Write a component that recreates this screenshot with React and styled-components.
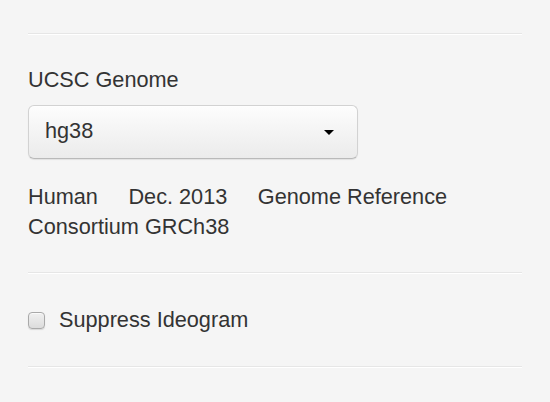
import React from 'react';
import styled, { createGlobalStyle } from 'styled-components';

const GlobalStyle = createGlobalStyle`
html, body {
    margin: 0;
    padding: 0;
    background: #f5f5f5;
}
body {
    font-family: "Liberation Sans", Arial, Helvetica, sans-serif;
    color: #333;
}
`

const Panel = styled.div`
width: 550px;
height: 402px;
box-sizing: border-box;
padding: 33px 28px 0 28px;
background: #f5f5f5;
overflow: hidden;
`

const Rule = styled.hr`
margin: 0;
height: 0;
border: 0;
border-top: 1px solid #e6e6e6;
border-bottom: 1px solid #fff;
`

const Group = styled.div`
padding: ${p => p.$top || 30}px 0 ${p => p.$bottom || 31}px 0;
`

const Label = styled.label`
display: block;
font-size: 21.7px;
line-height: 30px;
margin-bottom: 10px;
`

const SelectButton = styled.button`
display: flex;
align-items: center;
justify-content: space-between;
width: 330px;
height: 54px;
box-sizing: border-box;
padding: 0 23px 2px 16px;
font-family: inherit;
font-size: 21.7px;
line-height: 30px;
color: #333;
text-align: left;
background: linear-gradient(to bottom, #fdfdfd 0%, #ebebeb 100%);
border: 1px solid #d2d2d2;
border-bottom-color: #b9b9b9;
border-radius: 6px;
box-shadow: inset 0 1px 0 rgba(255, 255, 255, 0.6), 0 1px 1px rgba(0, 0, 0, 0.08);
cursor: pointer;
`

const Caret = styled.span`
display: inline-block;
width: 0;
height: 0;
margin-top: 2px;
border-top: 5px solid #000;
border-left: 5px solid transparent;
border-right: 5px solid transparent;
`

const Description = styled.p`
margin: 23px 0 0 0;
font-size: 21.7px;
line-height: 30px;
`

const Segment = styled.span`
padding-right: 30.5px;
&:last-child {
    padding-right: 0;
}
`

const CheckRow = styled.label`
display: flex;
align-items: center;
font-size: 21.7px;
line-height: 30px;
cursor: pointer;
`

const CheckBox = styled.span`
display: inline-block;
width: 15px;
height: 15px;
margin: 1px 14px 0 0;
border: 1px solid #a9a9a9;
border-radius: 4px;
background: linear-gradient(to bottom, #f0f0f0 0%, #dcdcdc 100%);
box-shadow: 0 1px 1px rgba(0, 0, 0, 0.12), inset 0 1px 0 rgba(255, 255, 255, 0.7);
`

export default function App() {
    return (
        <>
            <GlobalStyle />
            <Panel>
                <Rule />
                <Group $bottom={30}>
                    <Label>UCSC Genome</Label>
                    <SelectButton type="button">
                        <span>hg38</span>
                        <Caret />
                    </SelectButton>
                    <Description>
                        <Segment>Human</Segment>
                        <Segment>Dec. 2013</Segment>
                        <Segment>Genome Reference Consortium GRCh38</Segment>
                    </Description>
                </Group>
                <Rule />
                <Group $top={31} $bottom={31}>
                    <CheckRow>
                        <CheckBox />
                        Suppress Ideogram
                    </CheckRow>
                </Group>
                <Rule />
            </Panel>
        </>
    )
}
